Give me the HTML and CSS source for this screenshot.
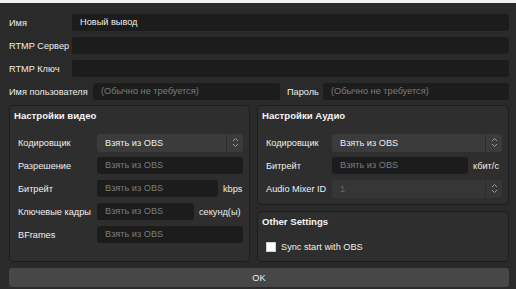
FILE: index.html
```html
<!DOCTYPE html>
<html lang="ru">
<head>
    <meta charset="UTF-8">
    <title>Новый вывод</title>
    <link rel="stylesheet" href="styles.css">
</head>
<body>
    <div class="top-edge"></div>

    <div class="window">
        <div class="basic">
            <div class="row">
                <label class="lbl-main">Имя</label>
                <div class="field">Новый вывод</div>
            </div>
            <div class="row">
                <label class="lbl-main">RTMP Сервер</label>
                <div class="field"></div>
            </div>
            <div class="row">
                <label class="lbl-main">RTMP Ключ</label>
                <div class="field"></div>
            </div>
            <div class="row">
                <label class="lbl-user">Имя пользователя</label>
                <div class="field placeholder user">(Обычно не требуется)</div>
                <label class="lbl-pass">Пароль</label>
                <div class="field placeholder">(Обычно не требуется)</div>
            </div>
        </div>

        <div class="groups">
            <div class="group video">
                <div class="group-title">Настройки видео</div>
                <div class="group-rows">
                    <div class="grow">
                        <label>Кодировщик</label>
                        <div class="combo"><span>Взять из OBS</span><div class="spin"><svg width="7" height="11" viewBox="0 0 7 11"><path d="M1 4 L3.5 1.5 L6 4 M1 7 L3.5 9.5 L6 7" fill="none" stroke="#9a9a9a" stroke-width="1"/></svg></div></div>
                    </div>
                    <div class="grow">
                        <label>Разрешение</label>
                        <div class="field placeholder">Взять из OBS</div>
                    </div>
                    <div class="grow">
                        <label>Битрейт</label>
                        <div class="field placeholder w-bitrate">Взять из OBS</div>
                        <span class="unit">kbps</span>
                    </div>
                    <div class="grow">
                        <label>Ключевые кадры</label>
                        <div class="field placeholder w-keys">Взять из OBS</div>
                        <span class="unit">секунд(ы)</span>
                    </div>
                    <div class="grow">
                        <label>BFrames</label>
                        <div class="field placeholder">Взять из OBS</div>
                    </div>
                </div>
            </div>

            <div class="right-col">
                <div class="group audio">
                    <div class="group-title">Настройки Аудио</div>
                    <div class="group-rows">
                        <div class="grow">
                            <label>Кодировщик</label>
                            <div class="combo"><span>Взять из OBS</span><div class="spin"><svg width="7" height="11" viewBox="0 0 7 11"><path d="M1 4 L3.5 1.5 L6 4 M1 7 L3.5 9.5 L6 7" fill="none" stroke="#9a9a9a" stroke-width="1"/></svg></div></div>
                        </div>
                        <div class="grow">
                            <label>Битрейт</label>
                            <div class="field placeholder w-abitrate">Взять из OBS</div>
                            <span class="unit">кбит/с</span>
                        </div>
                        <div class="grow">
                            <label>Audio Mixer ID</label>
                            <div class="combo disabled"><span>1</span><div class="spin"><svg width="7" height="11" viewBox="0 0 7 11"><path d="M1 4 L3.5 1.5 L6 4 M1 7 L3.5 9.5 L6 7" fill="none" stroke="#9a9a9a" stroke-width="1"/></svg></div></div>
                        </div>
                    </div>
                </div>

                <div class="group other">
                    <div class="group-title">Other Settings</div>
                    <label class="check"><span class="box"></span>Sync start with OBS</label>
                </div>
            </div>
        </div>

        <button class="ok">OK</button>
    </div>
</body>
</html>
```

FILE: styles.css
```css
* {
    margin: 0;
    padding: 0;
    box-sizing: border-box;
    font-family: 'Liberation Sans', Arial, sans-serif;
}

body {
    background: #2a2a2a;
    color: #eeeeee;
    font-size: 9.2px;
    width: 516px;
    height: 289px;
    overflow: hidden;
}

label, span {
    white-space: nowrap;
}

.top-edge {
    height: 3px;
    background: #f2f2f2;
}

.window {
    padding: 11px 7px 0 9px;
}

.basic {
    display: flex;
    flex-direction: column;
    gap: 6px;
}

.row {
    display: flex;
    align-items: center;
    height: 17px;
}

.lbl-main {
    width: 63px;
    flex-shrink: 0;
}

.lbl-user {
    width: 84px;
    flex-shrink: 0;
}

.lbl-pass {
    width: 43px;
    padding-left: 7px;
    flex-shrink: 0;
}

.field {
    flex: 1;
    height: 17px;
    line-height: 17px;
    background: #1c1c1c;
    border-radius: 3px;
    padding-left: 8px;
    color: #eeeeee;
    white-space: nowrap;
    overflow: hidden;
}

.field.user {
    flex: 0 0 187px;
}

.placeholder {
    color: #7c7c7c;
}

.groups {
    display: grid;
    grid-template-columns: 241px 252px;
    height: 157px;
    gap: 7px;
    margin-top: 5px;
}

.group {
    background: #2e2e2e;
    border: 1px solid #1d1d1d;
    border-radius: 4px;
}

.group-title {
    font-weight: 700;
    font-size: 9.6px;
    color: #f4f4f4;
    padding: 2px 0 0 4px;
    height: 20px;
    line-height: 16px;
}

.group-rows {
    display: flex;
    flex-direction: column;
    gap: 6px;
    padding: 8px 6px 0 8px;
}

.grow {
    display: flex;
    align-items: center;
    height: 17px;
}

.grow label {
    width: 79px;
    flex-shrink: 0;
}

.audio .grow label {
    width: 66px;
}

.grow .field {
    padding-left: 8px;
}

.w-bitrate {
    flex: 0 0 121px;
}

.w-keys {
    flex: 0 0 97px;
}

.w-abitrate {
    flex: 0 0 136px;
}

.unit {
    padding-left: 5px;
}

.combo {
    flex: 1;
    display: flex;
    height: 18px;
    background: #3b3b3b;
    border-radius: 3px;
    overflow: hidden;
}

.combo span {
    flex: 1;
    line-height: 18px;
    padding-left: 8px;
    color: #eeeeee;
}

.combo.disabled {
    background: #363636;
}

.combo.disabled span {
    color: #6a6a6a;
}

.spin {
    width: 17px;
    border-left: 1px solid #2c2c2c;
    display: flex;
    align-items: center;
    justify-content: center;
}

.right-col {
    display: flex;
    flex-direction: column;
    gap: 6px;
}

.audio {
    height: 100px;
}

.other {
    flex: 1;
}

.check {
    display: flex;
    align-items: center;
    gap: 5px;
    padding: 10px 0 0 8px;
}

.box {
    width: 10px;
    height: 10px;
    background: #ffffff;
    border: 1px solid #d0d0d0;
}

.ok {
    display: block;
    width: 500px;
    height: 19px;
    margin-top: 6px;
    background: #474747;
    color: #eeeeee;
    border: none;
    border-radius: 3px;
    font-size: 9.2px;
    font-family: 'Liberation Sans', Arial, sans-serif;
}
```
